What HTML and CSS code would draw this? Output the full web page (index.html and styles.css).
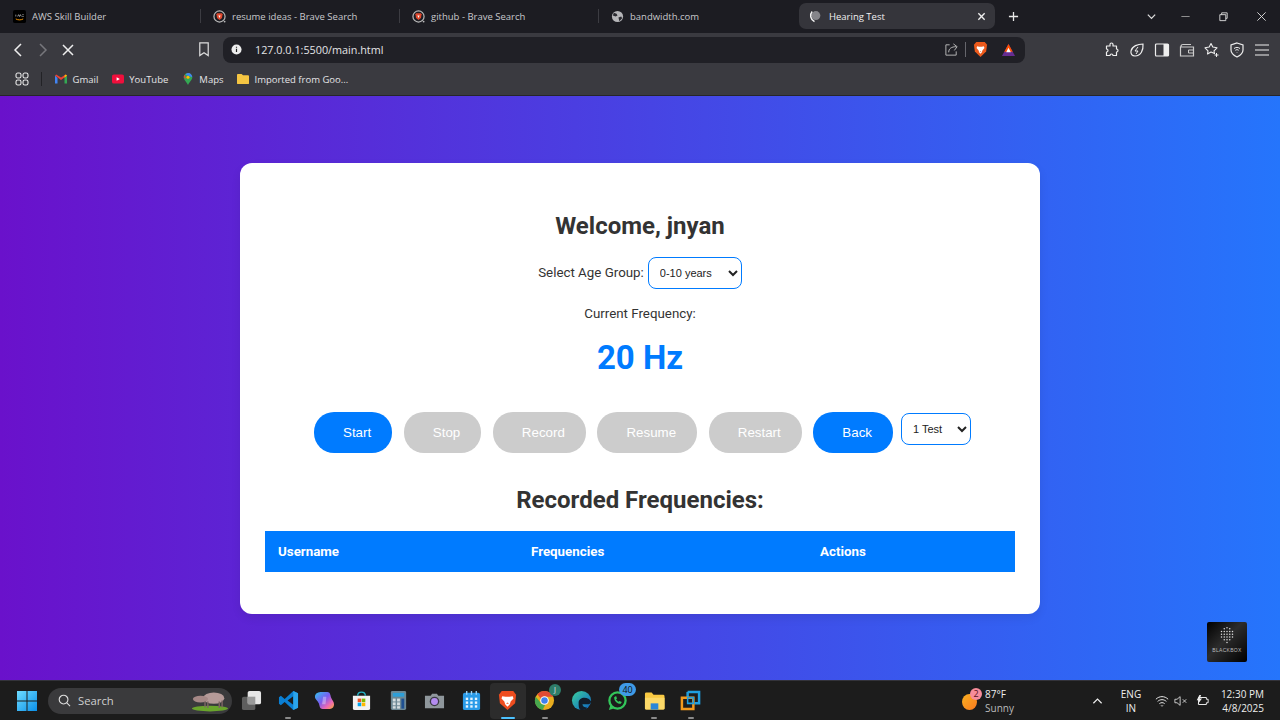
FILE: index.html
```html
<!DOCTYPE html>
<html lang="en">
<head>
  <meta charset="UTF-8" />
  <title>Hearing Test</title>
  <meta name="viewport" content="width=device-width, initial-scale=1.0" />
  <link rel="stylesheet" href="styles.css">
</head>
<body>
  <!-- browser tabs -->
  <div class="tabbar">
    <div class="tab">
      <svg class="favicon" viewBox="0 0 14 14"><rect width="14" height="14" rx="2" fill="#000"/><path d="M3 9.600c2.500 1.400 5.500 1.400 8 0" stroke="#f90" stroke-width="1" fill="none"/><path d="M3 7V5M5 7l1-2 1 2 1-2 1 2M10 5h1.500M10 7h1.500" stroke="#ccc" stroke-width=".7" fill="none"/></svg>
      <span>AWS Skill Builder</span>
    </div>
    <div class="tab sep">
      <svg class="favicon" viewBox="0 0 14 14"><circle cx="7" cy="7" r="6" fill="none" stroke="#b8b8b8" stroke-width="1.300"/><path d="M4.500 3.500h5l.8 1.200-.6 3.800L7 10.800 4.300 8.500l-.6-3.800z" fill="#e0492e"/><path d="M5.800 6h2.400L7 8.500z" fill="#fff"/><circle cx="12.500" cy="12.500" r="1" fill="#b8b8b8"/></svg>
      <span>resume ideas - Brave Search</span>
    </div>
    <div class="tab sep">
      <svg class="favicon" viewBox="0 0 14 14"><circle cx="7" cy="7" r="6" fill="none" stroke="#b8b8b8" stroke-width="1.300"/><path d="M4.500 3.500h5l.8 1.200-.6 3.800L7 10.800 4.300 8.500l-.6-3.800z" fill="#e0492e"/><path d="M5.800 6h2.400L7 8.500z" fill="#fff"/><circle cx="12.500" cy="12.500" r="1" fill="#b8b8b8"/></svg>
      <span>github - Brave Search</span>
    </div>
    <div class="tab sep">
      <svg class="favicon" viewBox="0 0 14 14"><circle cx="7" cy="7" r="6" fill="#b5b5b8"/><path d="M3 3l3 1 1 2-2 1-3-1zM8 8l3-1 1 2-3 3z" fill="#2a2a30"/></svg>
      <span>bandwidth.com</span>
    </div>
    <div class="tab active">
      <svg class="favicon" viewBox="0 0 14 14"><circle cx="8.500" cy="6" r="4.800" fill="#85858a"/><path d="M4.500 1.500C1.500 5 2.500 10 7 12.500" fill="none" stroke="#f0f0f0" stroke-width="1.600"/></svg>
      <span class="tab-title">Hearing Test</span>
      <svg class="tab-close" viewBox="0 0 10 10"><path d="M1.500 1.500l7 7M8.500 1.500l-7 7" stroke="#eee" stroke-width="1.500"/></svg>
    </div>
    <svg class="newtab" viewBox="0 0 12 12"><path d="M6 1v10M1 6h10" stroke="#e8e8e8" stroke-width="1.400"/></svg>
    <div class="winbtns">
      <svg class="winbtn chevron" viewBox="0 0 12 12"><path d="M2 4l4 4 4-4" fill="none" stroke="#ddd" stroke-width="1.400"/></svg>
      <svg class="winbtn" viewBox="0 0 12 12"><path d="M1.500 6h9" stroke="#999"/></svg>
      <svg class="winbtn" viewBox="0 0 12 12"><path d="M2 4h6.500v6.500H2zM4 4V2h6v6H8.500" fill="none" stroke="#ddd"/></svg>
      <svg class="winbtn" viewBox="0 0 12 12"><path d="M1.500 1.500l9 9M10.500 1.500l-9 9" stroke="#ddd"/></svg>
    </div>
  </div>

  <!-- toolbar -->
  <div class="toolbar">
    <svg class="nav-icon" viewBox="0 0 16 16"><path d="M11 2L5 8l6 6" fill="none" stroke="#eee" stroke-width="1.500"/></svg>
    <svg class="nav-icon" viewBox="0 0 16 16"><path d="M5 2l6 6-6 6" fill="none" stroke="#77777c" stroke-width="1.500"/></svg>
    <svg class="nav-icon" viewBox="0 0 16 16"><path d="M3 3l10 10M13 3L3 13" stroke="#eee" stroke-width="1.500"/></svg>
    <svg class="bookmark" viewBox="0 0 12 16"><path d="M1.500 1h9v13.500L6 11.500l-4.500 3z" fill="none" stroke="#ddd" stroke-width="1.300"/></svg>
    <div class="addressbar">
      <svg class="info" viewBox="0 0 12 12"><circle cx="6" cy="6" r="5.500" fill="#eee"/><path d="M6 5.200v3.600M6 3v1.200" stroke="#222" stroke-width="1.300"/></svg>
      <span class="url">127.0.0.1:5500/main.html</span>
      <svg class="share" viewBox="0 0 16 16"><path d="M6 3H2v11h11v-4" fill="none" stroke="#bbb"/><path d="M5 11c0-4 3-6 8-6M10 2l4 3-3 4" fill="none" stroke="#bbb"/></svg>
      <span class="addr-sep"></span>
      <svg class="brave" viewBox="0 0 16 18"><path d="M3.500 1h9L15 4l-1 7-6 6-6-6-1-7z" fill="#ec5a1c"/><path d="M4.500 5.500l2 .5h3l2-.5.700 2-2.200 2.500-.5 2L8 13.500 6.500 12 6 10 3.800 7.500z" fill="#fff"/><path d="M8 10.500l1 1H7z" fill="#ec5a1c"/></svg>
      <svg class="bat" viewBox="0 0 16 15"><path d="M8 1l7 13H1z" fill="#662d91"/><path d="M8 1l4.500 8.500h-9z" fill="#ff5000"/><path d="M8 5l2.500 5h-5z" fill="#fff"/></svg>
    </div>
    <div class="ext-icons">
      <svg viewBox="0 0 16 16"><path d="M6 2.500c0-2 3-2 3 0V4h3.500v3c2 0 2 3 0 3v3.500H9c0-2-3-2-3 0H2.500V10c2 0 2-3 0-3V4H6z" fill="none" stroke="#eee" stroke-width="1.200" stroke-linejoin="round"/></svg>
      <svg viewBox="0 0 16 16"><path d="M14 2c.500 6-2 12-8 12-3 0-4.500-2-4-5C3 4 9 2 14 2z" fill="none" stroke="#eee" stroke-width="1.200"/><path d="M9 5L6 9h3l-2 3" fill="none" stroke="#eee"/></svg>
      <svg viewBox="0 0 16 16"><rect x="1.500" y="2" width="13" height="12" rx="1" fill="none" stroke="#eee" stroke-width="1.200"/><rect x="9.500" y="2" width="5" height="12" fill="#eee"/></svg>
      <svg viewBox="0 0 16 16"><path d="M2 4.500C2 3 3 2.500 4 2.500h8M1.500 5h13v9h-13z" fill="none" stroke="#ccc" stroke-width="1.200"/><path d="M9.500 8h5v3h-5z" fill="none" stroke="#ccc"/></svg>
      <svg viewBox="0 0 16 16"><path d="M7 1.500l1.800 3.500 4.200.8-3 3 .5 2.700L7 10l-3.500 2 .5-3.200-3-3 4.200-.8z" fill="none" stroke="#eee" stroke-width="1.100" stroke-linejoin="round"/><path d="M12.500 11v4M10.500 13h4" stroke="#eee"/></svg>
      <svg viewBox="0 0 16 16"><path d="M8 1l6 2v5c0 3-3 5.500-6 7-3-1.500-6-4-6-7V3z" fill="none" stroke="#eee" stroke-width="1.200"/><path d="M5 6.500c2-1.500 4-1.500 6 0M6.300 8.300c1-.8 2.400-.8 3.400 0M8 10v.5" fill="none" stroke="#eee"/></svg>
      <svg viewBox="0 0 16 16"><path d="M1 3h14M1 8h14M1 13h14" stroke="#eee" stroke-width="1.200"/></svg>
    </div>
  </div>

  <!-- bookmarks -->
  <div class="bookmarks">
    <svg class="apps" viewBox="0 0 14 14"><rect x="1" y="1" width="5" height="5" rx="1.800" fill="none" stroke="#e8e8e8" stroke-width="1.100"/><rect x="8" y="1" width="5" height="5" rx="1.800" fill="none" stroke="#e8e8e8" stroke-width="1.100"/><rect x="1" y="8" width="5" height="5" rx="1.800" fill="none" stroke="#e8e8e8" stroke-width="1.100"/><rect x="8" y="8" width="5" height="5" rx="1.800" fill="none" stroke="#e8e8e8" stroke-width="1.100"/></svg>
    <span class="bm-sep"></span>
    <div class="bm">
      <svg viewBox="0 0 12 10"><path d="M0 1.500v8h2.500V4z" fill="#4285f4"/><path d="M12 1.500v8H9.500V4z" fill="#34a853"/><path d="M0 1.500L6 6l6-4.500-1.200-1L6 3.500 1.200.5z" fill="#ea4335"/><path d="M9.500 4L12 1.500 10.800.500 9.500 1.500z" fill="#fbbc04"/></svg>
      <span>Gmail</span>
    </div>
    <div class="bm">
      <svg viewBox="0 0 13 10"><rect width="13" height="10" rx="2" fill="#f00f3c"/><path d="M5 3l3.500 2L5 7z" fill="#fff"/></svg>
      <span>YouTube</span>
    </div>
    <div class="bm">
      <svg viewBox="0 0 10 14"><path d="M5 0a5 5 0 0 1 5 5c0 3-3 5-5 9-2-4-5-6-5-9a5 5 0 0 1 5-5z" fill="#34a853"/><path d="M5 0a5 5 0 0 1 5 5L2 2a5 5 0 0 1 3-2z" fill="#4285f4"/><path d="M1 2a5 5 0 0 0-1 3l3 2z" fill="#ea4335"/><circle cx="5" cy="5" r="1.800" fill="#fbbc04"/></svg>
      <span>Maps</span>
    </div>
    <div class="bm">
      <svg viewBox="0 0 13 11"><path d="M0 1a1 1 0 0 1 1-1h4l1.500 1.500H12a1 1 0 0 1 1 1V10a1 1 0 0 1-1 1H1a1 1 0 0 1-1-1z" fill="#f5c542"/></svg>
      <span>Imported from Goo...</span>
    </div>
  </div>

  <!-- the page itself -->
  <main class="viewport">
    <div class="card">
      <h2 class="welcome">Welcome, jnyan</h2>
      <div class="age-row">
        <label for="ageGroup">Select Age Group:</label>
        <select id="ageGroup" class="age-select">
          <option>0-10 years</option>
        </select>
      </div>
      <p class="current">Current Frequency:</p>
      <div class="freq">20 Hz</div>
      <div class="controls">
        <button class="btn">Start</button>
        <button class="btn off">Stop</button>
        <button class="btn off">Record</button>
        <button class="btn off">Resume</button>
        <button class="btn off">Restart</button>
        <button class="btn">Back</button>
        <select class="test-select">
          <option>1 Test</option>
        </select>
      </div>
      <h2 class="recorded">Recorded Frequencies:</h2>
      <table class="results">
        <thead>
          <tr>
            <th class="col-user">Username</th>
            <th class="col-freq">Frequencies</th>
            <th>Actions</th>
          </tr>
        </thead>
      </table>
    </div>

    <div class="blackbox">
      <svg viewBox="0 0 24 24"><g fill="#ddd">
        <circle cx="9" cy="4" r=".8"/><circle cx="12" cy="3" r=".8"/><circle cx="15" cy="4" r=".8"/>
        <circle cx="6" cy="7" r=".8"/><circle cx="9" cy="7" r=".8"/><circle cx="12" cy="7" r=".8"/><circle cx="15" cy="7" r=".8"/><circle cx="18" cy="7" r=".8"/>
        <circle cx="6" cy="10" r=".8"/><circle cx="9" cy="10" r=".8"/><circle cx="12" cy="10" r=".8"/><circle cx="15" cy="10" r=".8"/><circle cx="18" cy="10" r=".8"/>
        <circle cx="6" cy="13" r=".8"/><circle cx="9" cy="13" r=".8"/><circle cx="12" cy="13" r=".8"/><circle cx="15" cy="13" r=".8"/><circle cx="18" cy="13" r=".8"/>
        <circle cx="9" cy="16" r=".8"/><circle cx="12" cy="16" r=".8"/><circle cx="15" cy="16" r=".8"/>
        <circle cx="12" cy="19" r=".8"/>
      </g></svg>
      <span>BLACKBOX</span>
    </div>
  </main>

  <!-- windows taskbar -->
  <footer class="taskbar">
    <svg class="start" viewBox="0 0 20 20"><defs><linearGradient id="winGrad" x1="0" y1="0" x2="1" y2="1"><stop offset="0" stop-color="#6fdcff"/><stop offset="1" stop-color="#0a8fe8"/></linearGradient></defs><path d="M0 0h9.500v9.500H0zM10.500 0H20v9.500h-9.500zM0 10.500h9.500V20H0zM10.500 10.500H20V20h-9.500z" fill="url(#winGrad)"/></svg>
    <div class="search">
      <svg viewBox="0 0 14 14"><circle cx="6" cy="6" r="4.700" fill="none" stroke="#ddd" stroke-width="1.200"/><path d="M9.500 9.500l3.500 3.500" stroke="#ddd" stroke-width="1.200"/></svg>
      <span>Search</span>
      <svg class="pig" viewBox="0 0 40 24"><ellipse cx="20" cy="20.500" rx="19" ry="3" fill="#6aa52c"/><ellipse cx="24" cy="9.500" rx="11" ry="6" fill="#b59a98"/><ellipse cx="10" cy="10.500" rx="8" ry="3.500" fill="#a58886"/><path d="M17 13h1.500v7H17zM29 13h1.500v7H29zM14 13h1.500v6H14zM32 12h1.500v7H32z" fill="#7d6664"/></svg>
    </div>
    <div class="apps-row">
      <div class="app">
        <svg viewBox="0 0 22 22"><rect x="1" y="7" width="14" height="14" rx="2" fill="#5e5e5e"/><rect x="7" y="1" width="14" height="14" rx="2" fill="#e6e6e6"/><rect x="7" y="7" width="8" height="8" fill="#9a9a9a"/></svg>
      </div>
      <div class="app open">
        <svg viewBox="0 0 22 22"><path d="M16 1l5 2.500v15L16 21 7 12.500 3 16l-2-1.500v-7L3 6l4 3.500z" fill="#0a7fd4"/><path d="M16 6.500L10 11l6 4.500z" fill="#1c1c1c"/><path d="M16 1l5 2.500v15L16 21z" fill="#2ba5ec"/></svg>
      </div>
      <div class="app">
        <svg viewBox="0 0 22 22"><defs><linearGradient id="copGrad" x1="0" y1="0" x2="1" y2="1"><stop offset="0" stop-color="#2fc4ee"/><stop offset=".45" stop-color="#7a5cf0"/><stop offset=".75" stop-color="#f06ab0"/><stop offset="1" stop-color="#f5b030"/></linearGradient></defs><path d="M8 2h6c3 0 3 3 4 6s3 4 3 7c0 4-3 5-5 5h-7c-3 0-3-3-4-6S1 10 1 7c0-4 4-5 7-5z" fill="url(#copGrad)"/><path d="M9.500 7h3.500l-1 8H8.500z" fill="#fff" opacity=".35"/></svg>
      </div>
      <div class="app">
        <svg viewBox="0 0 22 22"><path d="M2 6h18v13a2 2 0 0 1-2 2H4a2 2 0 0 1-2-2z" fill="#f2f2f2"/><path d="M7 6c0-5 8-5 8 0" fill="none" stroke="#26b5c8" stroke-width="1.500"/><rect x="7" y="9" width="3.700" height="3.700" fill="#f25022"/><rect x="11.300" y="9" width="3.700" height="3.700" fill="#7fba00"/><rect x="7" y="13.300" width="3.700" height="3.700" fill="#00a4ef"/><rect x="11.300" y="13.300" width="3.700" height="3.700" fill="#ffb900"/></svg>
      </div>
      <div class="app">
        <svg viewBox="0 0 22 22"><rect x="3" y="1" width="16" height="20" rx="1.500" fill="#6d8894"/><rect x="5" y="3" width="12" height="4" fill="#2d9fd8"/><g fill="#d5dde0"><rect x="5" y="9" width="3" height="3"/><rect x="9.500" y="9" width="3" height="3"/><rect x="5" y="13" width="3" height="3"/><rect x="9.500" y="13" width="3" height="3"/><rect x="5" y="17" width="3" height="2.500"/><rect x="9.500" y="17" width="3" height="2.500"/></g><rect x="14" y="9" width="3" height="10.500" fill="#1d4f91"/></svg>
      </div>
      <div class="app">
        <svg viewBox="0 0 22 22"><path d="M1 6h6l1.500-2h5L15 6h6v13H1z" fill="#8f979c"/><circle cx="11" cy="12" r="5" fill="#3a3a44"/><circle cx="11" cy="12" r="3.600" fill="#b48cf0"/></svg>
      </div>
      <div class="app">
        <svg viewBox="0 0 22 22"><rect x="2" y="3" width="18" height="18" rx="2" fill="#2a9be8"/><path d="M6 1v4M11 1v4M16 1v4" stroke="#9ed4f7" stroke-width="1.400"/><g fill="#e8f5ff"><rect x="5" y="8" width="2.500" height="2.500"/><rect x="9.700" y="8" width="2.500" height="2.500"/><rect x="14.500" y="8" width="2.500" height="2.500"/><rect x="5" y="12" width="2.500" height="2.500"/><rect x="9.700" y="12" width="2.500" height="2.500"/><rect x="14.500" y="12" width="2.500" height="2.500"/><rect x="5" y="16" width="2.500" height="2.500"/><rect x="9.700" y="16" width="2.500" height="2.500"/><rect x="14.500" y="16" width="2.500" height="2.500"/></g></svg>
      </div>
      <div class="app current-app">
        <svg viewBox="0 0 22 22"><path d="M5 1h12l3 4-1 9-8 7-8-7-1-9z" fill="#ee4d1f"/><path d="M5.500 6.500l3.500.5h4l3.500-.5.800 2.500-3 3-.8 3L11 17.500 8.500 15l-.8-3-3-3z" fill="#fff"/><path d="M11 13l1.500 1.500h-3z" fill="#ee4d1f"/></svg>
      </div>
      <div class="app open">
        <svg viewBox="0 0 22 22"><circle cx="11" cy="11" r="10" fill="#e9ad1f"/><path d="M11 1a10 10 0 0 1 9 6H11a4 4 0 0 0-4 2L3.500 4.500A10 10 0 0 1 11 1z" fill="#e04a35"/><path d="M1.800 7A10 10 0 0 0 9 21l3-6H9a4 4 0 0 1-3-3z" fill="#48a84e"/><circle cx="11" cy="11" r="4.500" fill="#fff"/><circle cx="11" cy="11" r="3.400" fill="#3f80ee"/></svg>
        <span class="avatar">J</span>
      </div>
      <div class="app">
        <svg viewBox="0 0 22 22"><defs><linearGradient id="edgeGrad" x1="0" y1="0" x2="1" y2="1"><stop offset="0" stop-color="#3bd0a0"/><stop offset="1" stop-color="#0e62c4"/></linearGradient></defs><circle cx="11" cy="11" r="10" fill="url(#edgeGrad)"/><path d="M8 13c0-3 3-5 6-5 3 0 6 1.500 7 4 0 2-2 3-4 3h-5c0 2 2 3.500 5 3.500-2 2-4 2.500-6 2.500-3 0-3-5-3-8z" fill="#111d2b"/></svg>
      </div>
      <div class="app">
        <svg viewBox="0 0 22 22"><circle cx="11" cy="11" r="8.500" fill="#1c1c1c" stroke="#33c65a" stroke-width="2.400"/><path d="M2 21l1.500-5 3.500 3.500z" fill="#33c65a"/><path d="M7.500 7.500c0 4 3 7 7 7l1-2-2.500-1-1 .8c-1-.5-2-1.500-2.500-2.500l1-1-1-2.500z" fill="#33c65a"/></svg>
        <span class="count">40</span>
      </div>
      <div class="app open">
        <svg viewBox="0 0 22 22"><path d="M1 4a1.500 1.500 0 0 1 1.500-1.500H8L10 5h10a1.500 1.500 0 0 1 1.500 1.500V19a1.500 1.500 0 0 1-1.500 1.500H2.500A1.500 1.500 0 0 1 1 19z" fill="#f9c942"/><path d="M1 8h20.500v11a1.500 1.500 0 0 1-1.500 1.500H2.500A1.500 1.500 0 0 1 1 19z" fill="#fcd968"/><rect x="7" y="14" width="8" height="6.500" fill="#2a86d8"/></svg>
      </div>
      <div class="app open">
        <svg viewBox="0 0 22 22"><path d="M8 2h12v12h-5" fill="none" stroke="#1f9fe0" stroke-width="2.600"/><path d="M8 2v6" stroke="#1f9fe0" stroke-width="2.600"/><path d="M2 8h12v12H2z" fill="none" stroke="#f39a1d" stroke-width="2.600"/><path d="M8 8h6v6H8z" fill="none" stroke="#1f9fe0" stroke-width="1.600"/></svg>
      </div>
    </div>

    <div class="weather">
      <span class="sun"></span>
      <span class="badge">2</span>
      <div class="weather-text">
        <span>87°F</span>
        <span class="dim">Sunny</span>
      </div>
    </div>
    <svg class="tray-up" viewBox="0 0 12 8"><path d="M1.500 6.500L6 2l4.500 4.500" fill="none" stroke="#eee" stroke-width="1.300"/></svg>
    <div class="lang">
      <span>ENG</span>
      <span>IN</span>
    </div>
    <div class="tray">
      <svg viewBox="0 0 16 16"><path d="M1 6c4-4 10-4 14 0M3 8.500c3-2.700 7-2.700 10 0M5 11c2-1.500 4-1.500 6 0M7 13l1 1 1-1" fill="none" stroke="#eee" stroke-width="1.100"/></svg>
      <svg viewBox="0 0 16 16"><path d="M1 6h2.500L7 3v10L3.500 10H1z" fill="none" stroke="#ddd"/><path d="M10 6l4 4M14 6l-4 4" stroke="#ddd"/></svg>
      <svg class="battery" viewBox="0 0 16 16"><path d="M4 4h9v2h2v4h-2v2H4z" fill="none" stroke="#eee" stroke-width="1.100"/><path d="M5 1L2 7h2.500L3 12l5-7H5.500L7 1z" fill="#eee"/></svg>
    </div>
    <div class="clock">
      <span>12:30 PM</span>
      <span>4/8/2025</span>
    </div>
  </footer>
</body>
</html>
```

FILE: styles.css
```css
:root {
  --tab-bg: #1c1c22;
  --toolbar-bg: #3a3a40;
  --chrome-text: #c8c8cc;
  --blue: #007bff;
  --grey-btn: #cccccc;
  --text-color: #333333;
}

* {
  box-sizing: border-box;
}

html, body {
  height: 100%;
}

body {
  margin: 0;
  height: 720px;
  overflow: hidden;
  display: flex;
  flex-direction: column;
  font-family: Roboto, Arial, sans-serif;
  color: var(--text-color);
}

/* tabs */
.tabbar {
  height: 33px;
  flex: none;
  display: flex;
  align-items: center;
  padding-left: 1px;
  background-color: var(--tab-bg);
  font-family: "Open Sans", sans-serif;
  font-size: 9.500px;
  color: var(--chrome-text);
}

.tab {
  width: 199px;
  height: 26px;
  margin-top: -1px;
  display: flex;
  align-items: center;
  gap: 6px;
  padding-left: 12px;
}

.tab.sep {
  height: 14px;
  border-left: 1px solid #3c3c42;
}

.tab.active {
  width: 196px;
  margin-left: 2px;
  padding-left: 9px;
  gap: 8px;
  background-color: #35353b;
  border-radius: 7px;
  color: #f0f0f0;
}

.favicon {
  width: 13px;
  height: 13px;
  flex: none;
}

.tab-title {
  flex: 1;
}

.tab-close {
  width: 9px;
  height: 9px;
  margin-right: 9px;
}

.newtab {
  width: 11px;
  height: 11px;
  margin-left: 13px;
}

.winbtns {
  margin-left: auto;
  display: flex;
  gap: 27px;
  padding-right: 13px;
}

.winbtn {
  width: 11px;
  height: 11px;
}

.chevron {
  margin-right: -4px;
}

/* toolbar */
.toolbar {
  height: 33px;
  flex: none;
  display: flex;
  align-items: center;
  background-color: var(--toolbar-bg);
  padding-left: 10px;
}

.nav-icon {
  width: 16px;
  height: 16px;
  margin-right: 9px;
}

.bookmark {
  width: 12px;
  height: 15px;
  margin-left: 113px;
  margin-right: 13px;
}

.addressbar {
  width: 802px;
  height: 26px;
  display: flex;
  align-items: center;
  background-color: #202026;
  border-radius: 8px;
  padding-left: 8px;
  color: #e4e4e6;
  font-family: "Open Sans", sans-serif;
  font-size: 10.800px;
}

.info {
  width: 11px;
  height: 11px;
  margin-right: 13px;
}

.url {
  flex: 1;
}

.share {
  width: 15px;
  height: 15px;
}

.addr-sep {
  width: 1px;
  height: 15px;
  margin: 0 7px 0 6px;
  background-color: #66666c;
}

.brave {
  width: 15px;
  height: 17px;
  margin-right: 13px;
}

.bat {
  width: 15px;
  height: 14px;
  margin-right: 9px;
}

.ext-icons {
  display: flex;
  gap: 9px;
  margin-left: 79px;
}

.ext-icons svg {
  width: 16px;
  height: 16px;
}

/* bookmarks bar */
.bookmarks {
  height: 30px;
  flex: none;
  display: flex;
  align-items: center;
  padding: 0 0 3px 15px;
  background-color: var(--toolbar-bg);
  border-bottom: 1px solid #26262a;
  font-family: "Open Sans", sans-serif;
  font-size: 9.500px;
  color: #e4e4e6;
}

.apps {
  width: 14px;
  height: 14px;
}

.bm-sep {
  width: 1px;
  height: 14px;
  margin: 0 13px 0 12px;
  background-color: #222226;
}

.bm {
  display: flex;
  align-items: center;
  gap: 5.500px;
  margin-right: 13.500px;
}

.bm svg {
  width: 12px;
  height: 12px;
}

/* page */
.viewport {
  flex: 1;
  position: relative;
  display: flex;
  justify-content: center;
  align-items: flex-start;
  padding-top: 67px;
  background: linear-gradient(to right, #6a11cb, #2575fc);
}

.card {
  width: 800px;
  height: 451px;
  padding: 0 25px;
  background-color: #ffffff;
  border-radius: 12px;
  box-shadow: 0 4px 10px rgba(0, 0, 0, 0.08);
  text-align: center;
}

.welcome {
  margin: 49px 0 17px;
  font-size: 24px;
  line-height: 28px;
  font-weight: 700;
}

.age-row {
  display: flex;
  justify-content: center;
  align-items: center;
  gap: 4px;
  font-size: 13.330px;
}

.age-row label {
  padding-bottom: 2px;
}

select {
  background-color: #ffffff;
  border: 1px solid var(--blue);
  border-radius: 8px;
  color: #222222;
  font-family: "Liberation Sans", Arial, sans-serif;
  font-size: 11px;
}

.age-select {
  width: 94px;
  height: 32px;
  padding-left: 7px;
}

.current {
  margin: 17px 0 0;
  font-size: 13.330px;
  line-height: 16px;
}

.freq {
  margin-top: 16px;
  font-size: 33px;
  line-height: 40px;
  font-weight: 700;
  color: var(--blue);
}

.controls {
  margin-top: 34px;
  padding-left: 5px;
  display: flex;
  justify-content: center;
  align-items: flex-start;
  gap: 11.650px;
}

.btn {
  height: 41px;
  padding: 0 21px 0 29px;
  border: none;
  border-radius: 20px;
  background-color: var(--blue);
  color: #ffffff;
  font-family: "Liberation Sans", Arial, sans-serif;
  font-size: 13.330px;
}

.btn.off {
  background-color: var(--grey-btn);
}

.test-select {
  width: 70px;
  height: 32px;
  margin: 1px 0 0 -3.650px;
  padding-left: 7px;
}

.recorded {
  margin: 33px 0 17px;
  font-size: 24px;
  line-height: 28px;
  font-weight: 700;
}

.results {
  width: 100%;
  border-collapse: collapse;
  table-layout: fixed;
}

.results th {
  height: 41px;
  padding: 0 13px;
  background-color: var(--blue);
  color: #ffffff;
  font-size: 13.330px;
  font-weight: 700;
  text-align: left;
}

.col-user {
  width: 253px;
}

.col-freq {
  width: 289px;
}

.blackbox {
  position: absolute;
  left: 1207px;
  top: 526px;
  width: 40px;
  height: 40px;
  display: flex;
  flex-direction: column;
  align-items: center;
  border-radius: 2px;
  background: linear-gradient(135deg, #000000, #2c2c2c 45%, #000000);
  color: #bbbbbb;
  font-family: "Liberation Sans", Arial, sans-serif;
  font-size: 5px;
  letter-spacing: 0.3px;
}

.blackbox svg {
  width: 22px;
  height: 22px;
  margin-top: 3px;
}

/* taskbar */
.taskbar {
  height: 40px;
  flex: none;
  display: flex;
  align-items: center;
  position: relative;
  background-color: #1c1c1c;
  border-top: 1px solid #33333a;
  font-family: "Open Sans", sans-serif;
  font-size: 10px;
  color: #eeeeee;
}

.start {
  width: 20px;
  height: 20px;
  margin-left: 17px;
  flex: none;
}

.search {
  width: 184px;
  height: 26px;
  margin-left: 11px;
  display: flex;
  align-items: center;
  gap: 7px;
  padding-left: 10px;
  border-radius: 13px;
  background-color: #3a3a3c;
  font-size: 11.300px;
  color: #cfcfcf;
}

.search svg {
  width: 13px;
  height: 13px;
}

.search .pig {
  width: 38px;
  height: 23px;
  margin-left: auto;
  margin-right: 3px;
}

.apps-row {
  display: flex;
  align-items: center;
  margin-left: 1.500px;
  width: 496px;
  flex: none;
}

.app {
  width: 36.600px;
  height: 36px;
  display: flex;
  justify-content: center;
  align-items: center;
  position: relative;
}

.app svg {
  width: 21px;
  height: 21px;
}

.app.open::after,
.current-app::after {
  content: "";
  position: absolute;
  left: 50%;
  bottom: 0;
  width: 6px;
  height: 2px;
  margin-left: -3px;
  border-radius: 1px;
  background-color: #8a8a8a;
}

.current-app {
  border-radius: 4px;
  background-color: #2c2c2c;
}

.current-app::after {
  width: 14px;
  margin-left: -7px;
  background-color: #4cc2ff;
}

.avatar {
  position: absolute;
  top: 1px;
  right: 2px;
  width: 12px;
  height: 12px;
  border-radius: 50%;
  background-color: #2e7d6a;
  font-size: 7px;
  line-height: 12px;
  text-align: center;
}

.count {
  position: absolute;
  top: 0;
  right: 0;
  width: 17px;
  height: 13px;
  border-radius: 7px;
  background-color: #3f9be8;
  color: #111111;
  font-size: 9px;
  line-height: 13px;
  text-align: center;
}

.weather {
  width: 52px;
  flex: none;
  margin-left: 232.500px;
  display: flex;
  align-items: center;
  gap: 8px;
  position: relative;
}

.sun {
  width: 16px;
  height: 16px;
  margin-top: 2px;
  border-radius: 50%;
  background: linear-gradient(135deg, #f9b020, #f97a20);
}

.badge {
  position: absolute;
  left: 8px;
  top: 1px;
  width: 12px;
  height: 12px;
  border-radius: 50%;
  background-color: #f78c9a;
  color: #5a1020;
  font-size: 9px;
  line-height: 12px;
  text-align: center;
}

.weather-text {
  display: flex;
  flex-direction: column;
  line-height: 14px;
}

.dim {
  color: #bbbbbb;
}

.tray-up {
  width: 11px;
  height: 8px;
  flex: none;
  margin-left: 77.500px;
}

.lang {
  width: 30px;
  flex: none;
  margin-left: 13.500px;
  display: flex;
  flex-direction: column;
  align-items: center;
  line-height: 14px;
}

.tray {
  display: flex;
  gap: 5px;
  margin-left: 9px;
}

.tray svg {
  width: 14px;
  height: 14px;
}

.tray .battery {
  margin-left: 2px;
}

.clock {
  width: 50px;
  flex: none;
  margin-left: 5px;
  display: flex;
  flex-direction: column;
  align-items: flex-end;
  line-height: 14px;
}
```
